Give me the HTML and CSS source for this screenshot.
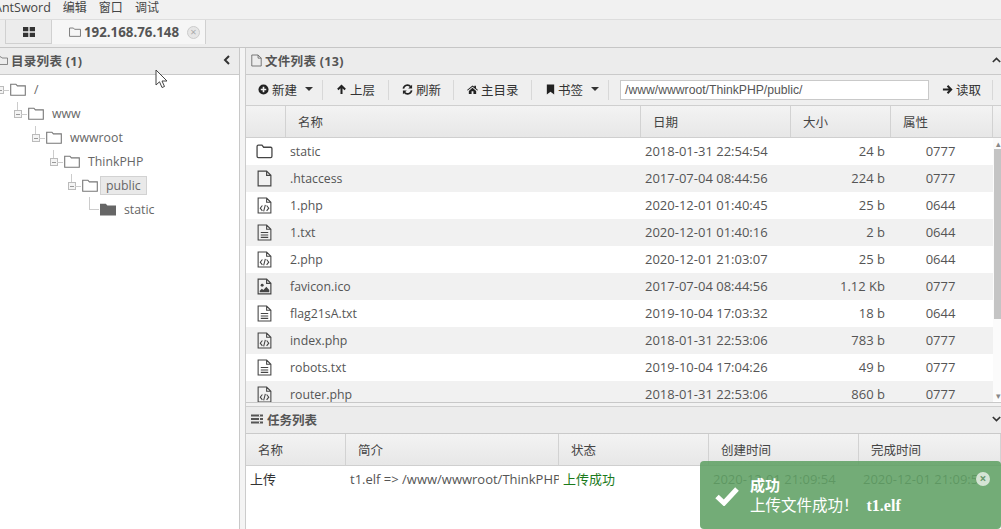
FILE: index.html
```html
<!DOCTYPE HTML>
<html>
<head>
  <meta charset="UTF-8">
  <title>AntSword</title>
  <link rel="stylesheet" href="styles.css">
</head>
<body>
<svg class="defs" width="0" height="0">
  <symbol id="i-folder" viewBox="0 0 16 13"><path d="M.7 12.3V1.2h5.2l1.5 1.7h7.9v9.4z" fill="none" stroke="currentColor" stroke-width="1.1"/></symbol>
  <symbol id="i-folder-solid" viewBox="0 0 16 13"><path d="M0 12.5V.8h5.8l1.6 1.8H16v9.9z" fill="currentColor"/></symbol>
  <symbol id="i-folder-round" viewBox="0 0 16 14"><path d="M1 11.5V2.2Q1 1 2.2 1h3.4l1.6 2h6.6Q15 3 15 4.2v7.3q0 1.3-1.2 1.3H2.2Q1 12.8 1 11.5z" fill="none" stroke="currentColor" stroke-width="1.2"/></symbol>
  <symbol id="i-file" viewBox="0 0 14 16"><path d="M1 1h8l4 4v10H1zM9 1v4h4" fill="none" stroke="currentColor" stroke-width="1.1"/></symbol>
  <symbol id="i-code" viewBox="0 0 14 16"><path d="M1 1h8l4 4v10H1zM9 1v4h4M5 8 3 10.5 5 13M9 8l2 2.500L9 13M7.800 7.500 6.200 13.500" fill="none" stroke="currentColor" stroke-width="1"/></symbol>
  <symbol id="i-text" viewBox="0 0 14 16"><path d="M1 1h8l4 4v10H1zM9 1v4h4M3.500 8h7M3.500 10.300h7M3.500 12.600h7" fill="none" stroke="currentColor" stroke-width="1"/></symbol>
  <symbol id="i-image" viewBox="0 0 14 16"><path d="M1 1h8l4 4v10H1zM9 1v4h4" fill="none" stroke="currentColor" stroke-width="1.100"/><circle cx="4.800" cy="6.800" r="1.400" fill="currentColor"/><path d="M2.500 13.500v-1.500l2-2 1.500 1.300 2.700-3 2.800 3v2.200z" fill="currentColor"/></symbol>
  <symbol id="i-plus" viewBox="0 0 12 12"><circle cx="6" cy="6" r="5.500" fill="currentColor"/><path d="M6 3v6M3 6h6" stroke="#f1f1f1" stroke-width="1.800"/></symbol>
  <symbol id="i-up" viewBox="0 0 12 12"><path d="M6 11V2M2 6l4-4 4 4" fill="none" stroke="currentColor" stroke-width="2.200"/></symbol>
  <symbol id="i-right" viewBox="0 0 12 12"><path d="M1 6h9M6 2l4 4-4 4" fill="none" stroke="currentColor" stroke-width="2.200"/></symbol>
  <symbol id="i-refresh" viewBox="0 0 12 12"><path d="M1.500 5A4.500 4.500 0 0 1 9.500 3M10.500 7A4.500 4.500 0 0 1 2.500 9" fill="none" stroke="currentColor" stroke-width="1.800"/><path d="M11 .8V5H6.800zM1 11.200V7h4.200z" fill="currentColor"/></symbol>
  <symbol id="i-home" viewBox="0 0 12 12"><path d="M0 6.500 6 1.500l2 1.600V2h1.800v2.500L12 6.500l-.8.700L6 3 .8 7.200zM2 7.500 6 4.200l4 3.300V11H7V8H5v3H2z" fill="currentColor"/></symbol>
  <symbol id="i-bookmark" viewBox="0 0 12 12"><path d="M2 .5h8v11L6 8.500l-4 3z" fill="currentColor"/></symbol>
  <symbol id="i-tasks" viewBox="0 0 12 10"><path d="M0 .5h12v2H0zM0 4h12v2H0zM0 7.500h12v2H0z" fill="currentColor"/><path d="M8 .5h1v2H8zM8 4h1v2H8zM8 7.500h1v2H8z" fill="#ececec"/></symbol>
  <symbol id="i-grid" viewBox="0 0 12 10"><path d="M0 0h5.300v4.300H0zM6.700 0H12v4.300H6.700zM0 5.700h5.300V10H0zM6.700 5.700H12V10H6.700z" fill="currentColor"/></symbol>
  <symbol id="i-check" viewBox="0 0 24 20"><path d="M2 10.500 9 17 22 3" fill="none" stroke="currentColor" stroke-width="5"/></symbol>
</svg>

<div class="menubar">
  <span class="menu-first">AntSword</span><span>编辑</span><span>窗口</span><span>调试</span>
</div>

<div class="tabbar">
  <div class="tab tab-grid"><svg class="ico-grid"><use href="#i-grid"/></svg></div>
  <div class="tab tab-active">
    <svg class="ico-tab"><use href="#i-folder"/></svg>
    <b>192.168.76.148</b>
    <span class="tab-close">×</span>
  </div>
</div>

<div class="workspace">
  <div class="leftpane">
    <div class="panehead">
      <svg class="ico-head ico-cut"><use href="#i-folder"/></svg><b>目录列表 (1)</b>
      <span class="chev">
        <svg width="9" height="10" viewBox="0 0 9 10"><path d="M7 1 3 5l4 4" fill="none" stroke="#333" stroke-width="2"/></svg>
      </span>
    </div>
    <div class="tree">
      <div class="node lv0"><i class="box"></i><svg class="tfolder"><use href="#i-folder"/></svg><span>/</span></div>
      <div class="node lv1"><i class="box"></i><svg class="tfolder"><use href="#i-folder"/></svg><span>www</span></div>
      <div class="node lv2"><i class="box"></i><svg class="tfolder"><use href="#i-folder"/></svg><span>wwwroot</span></div>
      <div class="node lv3"><i class="box"></i><svg class="tfolder"><use href="#i-folder"/></svg><span>ThinkPHP</span></div>
      <div class="node lv4"><i class="box"></i><svg class="tfolder"><use href="#i-folder"/></svg><span class="selected">public</span></div>
      <div class="node lv5"><i class="elbow"></i><svg class="tfolder dark"><use href="#i-folder-solid"/></svg><span>static</span></div>
    </div>
    <svg class="cursor" width="14" height="20" viewBox="0 0 14 20"><path d="M1 1v15l3.500-3.200 2.500 5.700 2.500-1-2.500-5.500H12z" fill="#fff" stroke="#444" stroke-width="1"/></svg>
  </div>

  <div class="splitter"></div>

  <div class="rightpane">
    <div class="panehead">
      <svg class="ico-file"><use href="#i-file"/></svg><b>文件列表 (13)</b>
      <span class="chev">
        <svg width="11" height="8" viewBox="0 0 11 8"><path d="M1 6.500 5.500 2 10 6.500" fill="none" stroke="#333" stroke-width="2"/></svg>
      </span>
    </div>

    <div class="toolbar">
      <div class="tool tool-new"><svg class="ico-tool"><use href="#i-plus"/></svg>新建<i class="caret"></i></div>
      <div class="tool tool-up"><svg class="ico-tool"><use href="#i-up"/></svg>上层</div>
      <div class="tool tool-refresh"><svg class="ico-tool"><use href="#i-refresh"/></svg>刷新</div>
      <div class="tool tool-home"><svg class="ico-tool"><use href="#i-home"/></svg>主目录</div>
      <div class="tool tool-mark"><svg class="ico-tool"><use href="#i-bookmark"/></svg>书签<i class="caret"></i></div>
      <div class="pathbox">/www/wwwroot/ThinkPHP/public/</div>
      <div class="tool tool-read"><svg class="ico-tool"><use href="#i-right"/></svg>读取</div>
    </div>

    <div class="filegrid">
      <div class="gridhead filecols">
        <div></div><div>名称</div><div>日期</div><div>大小</div><div>属性</div>
      </div>
      <div class="filebody">
        <div class="rows">
          <div class="frow filecols"><div><svg class="ficon"><use href="#i-folder-round"/></svg></div><div>static</div><div>2018-01-31 22:54:54</div><div class="size">24 b</div><div class="attr">0777</div></div>
          <div class="frow filecols"><div><svg class="ficon"><use href="#i-file"/></svg></div><div>.htaccess</div><div>2017-07-04 08:44:56</div><div class="size">224 b</div><div class="attr">0777</div></div>
          <div class="frow filecols"><div><svg class="ficon"><use href="#i-code"/></svg></div><div>1.php</div><div>2020-12-01 01:40:45</div><div class="size">25 b</div><div class="attr">0644</div></div>
          <div class="frow filecols"><div><svg class="ficon"><use href="#i-text"/></svg></div><div>1.txt</div><div>2020-12-01 01:40:16</div><div class="size">2 b</div><div class="attr">0644</div></div>
          <div class="frow filecols"><div><svg class="ficon"><use href="#i-code"/></svg></div><div>2.php</div><div>2020-12-01 21:03:07</div><div class="size">25 b</div><div class="attr">0644</div></div>
          <div class="frow filecols"><div><svg class="ficon"><use href="#i-image"/></svg></div><div>favicon.ico</div><div>2017-07-04 08:44:56</div><div class="size">1.12 Kb</div><div class="attr">0777</div></div>
          <div class="frow filecols"><div><svg class="ficon"><use href="#i-text"/></svg></div><div>flag21sA.txt</div><div>2019-10-04 17:03:32</div><div class="size">18 b</div><div class="attr">0644</div></div>
          <div class="frow filecols"><div><svg class="ficon"><use href="#i-code"/></svg></div><div>index.php</div><div>2018-01-31 22:53:06</div><div class="size">783 b</div><div class="attr">0777</div></div>
          <div class="frow filecols"><div><svg class="ficon"><use href="#i-text"/></svg></div><div>robots.txt</div><div>2019-10-04 17:04:26</div><div class="size">49 b</div><div class="attr">0777</div></div>
          <div class="frow filecols"><div><svg class="ficon"><use href="#i-code"/></svg></div><div>router.php</div><div>2018-01-31 22:53:06</div><div class="size">860 b</div><div class="attr">0777</div></div>
        </div>
        <div class="scrollbar">
          <span class="arrow">▴</span>
          <div class="thumb"></div>
          <span class="arrow">▾</span>
        </div>
      </div>
    </div>

    <div class="hsplit"></div>

    <div class="panehead taskhead">
      <svg class="ico-tasks"><use href="#i-tasks"/></svg><b>任务列表</b>
      <span class="chev">
        <svg width="11" height="8" viewBox="0 0 11 8"><path d="M1 1.500 5.500 6 10 1.500" fill="none" stroke="#333" stroke-width="2"/></svg>
      </span>
    </div>
    <div class="gridhead taskcols">
      <div>名称</div><div>简介</div><div>状态</div><div>创建时间</div><div>完成时间</div>
    </div>
    <div class="trow taskcols">
      <div>上传</div>
      <div class="clip">t1.elf =&gt; /www/wwwroot/ThinkPHP/public/t1.elf</div>
      <div class="ok">上传成功</div>
      <div>2020-12-01 21:09:54</div>
      <div>2020-12-01 21:09:54</div>
    </div>
  </div>
</div>

<div class="toast">
  <svg class="toast-check"><use href="#i-check"/></svg>
  <div class="toast-text">
    <div class="toast-title">成功</div>
    <div class="toast-msg">上传文件成功！<b>t1.elf</b></div>
  </div>
  <span class="toast-close">×</span>
</div>
</body>
</html>
```

FILE: styles.css
```css
* {
  box-sizing: border-box;
}
html, body {
  height: 100%;
  margin: 0;
  overflow: hidden;
}
body {
  font-family: "Open Sans", "Noto Sans CJK SC", sans-serif;
  font-size: 13px;
  color: #555;
  background: #fff;
}
.defs {
  position: absolute;
}

.menubar {
  height: 19px;
  background: #f1f1f1;
  color: #444;
  font-size: 12px;
  line-height: 15px;
  display: flex;
  gap: 12px;
  margin-left: -6px;
  white-space: nowrap;
}
.menu-first {
  font-size: 12.500px;
}

.tabbar {
  height: 29px;
  background: #ededed;
  border-top: 1px solid #ddd;
  border-bottom: 1px solid #c6c6c6;
  padding: 0 0 0 5px;
  display: flex;
  align-items: flex-start;
}
.tab {
  height: 24px;
  border-left: 1px solid #d0d0d0;
  border-bottom: 1px solid #d0d0d0;
  display: flex;
  align-items: center;
}
.tab-grid {
  width: 46px;
  justify-content: center;
  background: #ececec;
}
.ico-grid {
  width: 12px;
  height: 10px;
  color: #333;
}
.tab-active {
  width: 155px;
  background: #f6f6f6;
  padding-left: 17px;
  border-right: 1px solid #d0d0d0;
  border-bottom: 0;
  font-size: 13.300px;
  color: #555;
}
.ico-tab {
  width: 12px;
  height: 10px;
  color: #666;
  margin-right: 3px;
}
.tab-close {
  width: 13px;
  height: 13px;
  margin-left: 8px;
  border: 1px solid #ccc;
  border-radius: 50%;
  background: #e6e6e6;
  color: #aaa;
  font-size: 11px;
  line-height: 10px;
  text-align: center;
}

.workspace {
  display: flex;
  height: 481px;
}
.leftpane {
  width: 240px;
  border-right: 1px solid #c8c8c8;
  position: relative;
  overflow: hidden;
}
.splitter {
  width: 6px;
  background: #f4f4f4;
  border-right: 1px solid #ccc;
}
.rightpane {
  flex: 1;
  min-width: 0;
}

.panehead {
  height: 27px;
  background: #ececec;
  border-bottom: 1px solid #cacaca;
  display: flex;
  align-items: center;
  padding: 0 0 2px 5px;
  font-size: 12.500px;
  color: #555;
}
.panehead b {
  margin-left: 3px;
  letter-spacing: .3px;
}
.chev {
  margin-left: auto;
  margin-right: 8px;
  display: flex;
}
.rightpane .chev {
  margin-right: 0;
  width: 9px;
}
.ico-head {
  width: 11px;
  height: 9px;
  color: #666;
}
.ico-cut {
  margin-left: -8px;
}
.ico-file {
  width: 11px;
  height: 13px;
  color: #666;
}
.ico-tasks {
  width: 12px;
  height: 10px;
  color: #555;
}

.tree {
  padding-top: 2px;
  color: #666;
}
.node {
  height: 24px;
  display: flex;
  align-items: center;
  position: relative;
  font-size: 12.300px;
}
.lv0 { padding-left: 10px; }
.lv1 { padding-left: 28px; }
.lv2 { padding-left: 46px; }
.lv3 { padding-left: 64px; }
.lv4 { padding-left: 82px; }
.lv5 { padding-left: 100px; }
.tfolder {
  width: 16px;
  height: 13px;
  color: #777;
  margin-right: 8px;
  flex: none;
}
.tfolder.dark {
  color: #666;
}
.box {
  position: absolute;
  width: 8px;
  height: 8px;
  top: 9px;
  margin-left: -14px;
  border: 1px solid #bbb;
  background: linear-gradient(#999, #999) center / 4px 1px no-repeat #f4f4f4;
}
.box::before {
  content: "";
  position: absolute;
  left: 6px;
  top: 3px;
  width: 6px;
  border-top: 1px solid #ccc;
}
.box::after {
  content: "";
  position: absolute;
  left: 2px;
  top: -9px;
  height: 8px;
  border-left: 1px solid #ccc;
}
.lv0 .box::after {
  display: none;
}
.elbow {
  position: absolute;
  margin-left: -11px;
  top: 0;
  width: 10px;
  height: 13px;
  border-left: 1px solid #ccc;
  border-bottom: 1px solid #ccc;
}
.selected {
  margin-left: -6px;
  padding: 0 5px;
  height: 19px;
  line-height: 17px;
  background: #e9e9e9;
  border: 1px solid #d2d2d2;
}
.cursor {
  position: absolute;
  left: 155px;
  top: 21px;
}

.toolbar {
  height: 31px;
  background: #efefef;
  border-bottom: 1px solid #cfcfcf;
  display: flex;
  align-items: center;
  color: #333;
  font-size: 12.500px;
}
.tool {
  height: 20px;
  display: flex;
  align-items: center;
  border-right: 1px solid #d8d8d8;
  padding-left: 13px;
  padding-bottom: 2px;
  white-space: nowrap;
}
.ico-tool {
  width: 11px;
  height: 11px;
  color: #222;
  margin-right: 3px;
  flex: none;
}
.tool-new { width: 77px; padding-left: 12px; }
.tool-up { width: 66px; }
.tool-refresh { width: 65px; }
.tool-home { width: 78px; }
.tool-mark { width: 77px; }
.tool-mark .ico-tool { margin-right: 2px; }
.tool-read { width: 64px; }
.caret {
  width: 0;
  height: 0;
  margin-left: 8px;
  border: 4px solid transparent;
  border-top-color: #333;
  border-bottom: 0;
}
.pathbox {
  width: 309px;
  height: 20px;
  margin-left: 11px;
  border: 1px solid #c9c9c9;
  background: #fff;
  padding-left: 4px;
  line-height: 18px;
  color: #555;
  font-family: "Liberation Sans", sans-serif;
  font-size: 12.200px;
}

.filegrid {
  height: 297px;
  overflow: hidden;
  border-bottom: 1px solid #c8c8c8;
}
.gridhead {
  height: 32px;
  background: linear-gradient(#f3f3f3, #e7e7e7);
  border-bottom: 1px solid #cfcfcf;
  color: #444;
  font-size: 12.500px;
}
.gridhead > div {
  display: flex;
  align-items: center;
  padding-left: 12px;
  border-right: 1px solid #d2d2d2;
}
.filecols {
  display: grid;
  grid-template-columns: 40px 355px 150px 100px 102px;
}
.filebody {
  display: flex;
}
.rows {
  width: 747px;
  flex: none;
}
.frow {
  height: 27px;
  align-items: center;
}
.frow:nth-child(even) {
  background: #f1f1f1;
}
.frow > div {
  padding-bottom: 1px;
}
.frow > div:nth-child(2) {
  padding-left: 4px;
  padding-bottom: 0;
  font-size: 12.300px;
}
.frow > div:nth-child(3) {
  padding-left: 4px;
}
.frow > div:first-child {
  display: flex;
  padding-left: 10px;
  padding-bottom: 0;
}
.ficon {
  width: 17px;
  height: 17px;
  color: #444;
}
.size {
  text-align: right;
  padding-right: 6px;
}
.attr {
  text-align: center;
  padding-right: 3px;
}
.scrollbar {
  flex: 1;
  display: flex;
  flex-direction: column;
  align-items: center;
  height: 263px;
  background: #fbfbfb;
  color: #888;
  font-size: 9px;
  line-height: 11px;
  padding-left: 1px;
}
.thumb {
  width: 8px;
  height: 170px;
  flex: none;
  background: #c4c4c4;
  margin-bottom: auto;
}

.hsplit {
  height: 4px;
  background: #f2f2f2;
  border-bottom: 1px solid #cfcfcf;
}
.taskhead b {
  margin-left: 4px;
  letter-spacing: 0;
}
.taskcols {
  display: grid;
  grid-template-columns: 100px 213px 150px 150px 142px;
}
.taskcols.gridhead {
  height: 32px;
}
.trow {
  padding-top: 4px;
  line-height: 18px;
}
.trow > div {
  padding-left: 4px;
  white-space: nowrap;
  overflow: hidden;
}
.trow > div:first-child {
  color: #333;
}
.ok {
  color: #1c7a1c;
}

.toast {
  position: absolute;
  left: 700px;
  top: 461px;
  width: 301px;
  height: 68px;
  background: rgba(96, 160, 100, 0.88);
  border-radius: 4px;
  color: #fff;
  display: flex;
  align-items: flex-start;
  padding: 15px 0 0 15px;
}
.toast-check {
  width: 24px;
  height: 20px;
  margin-top: 10px;
  color: #fff;
  flex: none;
}
.toast-text {
  margin-left: 11px;
}
.toast-title {
  font-weight: bold;
  font-size: 15px;
  line-height: 19px;
}
.toast-msg {
  font-size: 15.500px;
  line-height: 20px;
  white-space: nowrap;
}
.toast-msg b {
  font-family: "Liberation Serif", serif;
  font-size: 16px;
  margin-left: 8px;
}
.toast-close {
  position: absolute;
  right: 11px;
  top: 11px;
  width: 14px;
  height: 14px;
  border-radius: 50%;
  background: #d5e4d5;
  color: #6a9a6e;
  font-size: 12px;
  font-weight: bold;
  line-height: 13px;
  text-align: center;
}
```
